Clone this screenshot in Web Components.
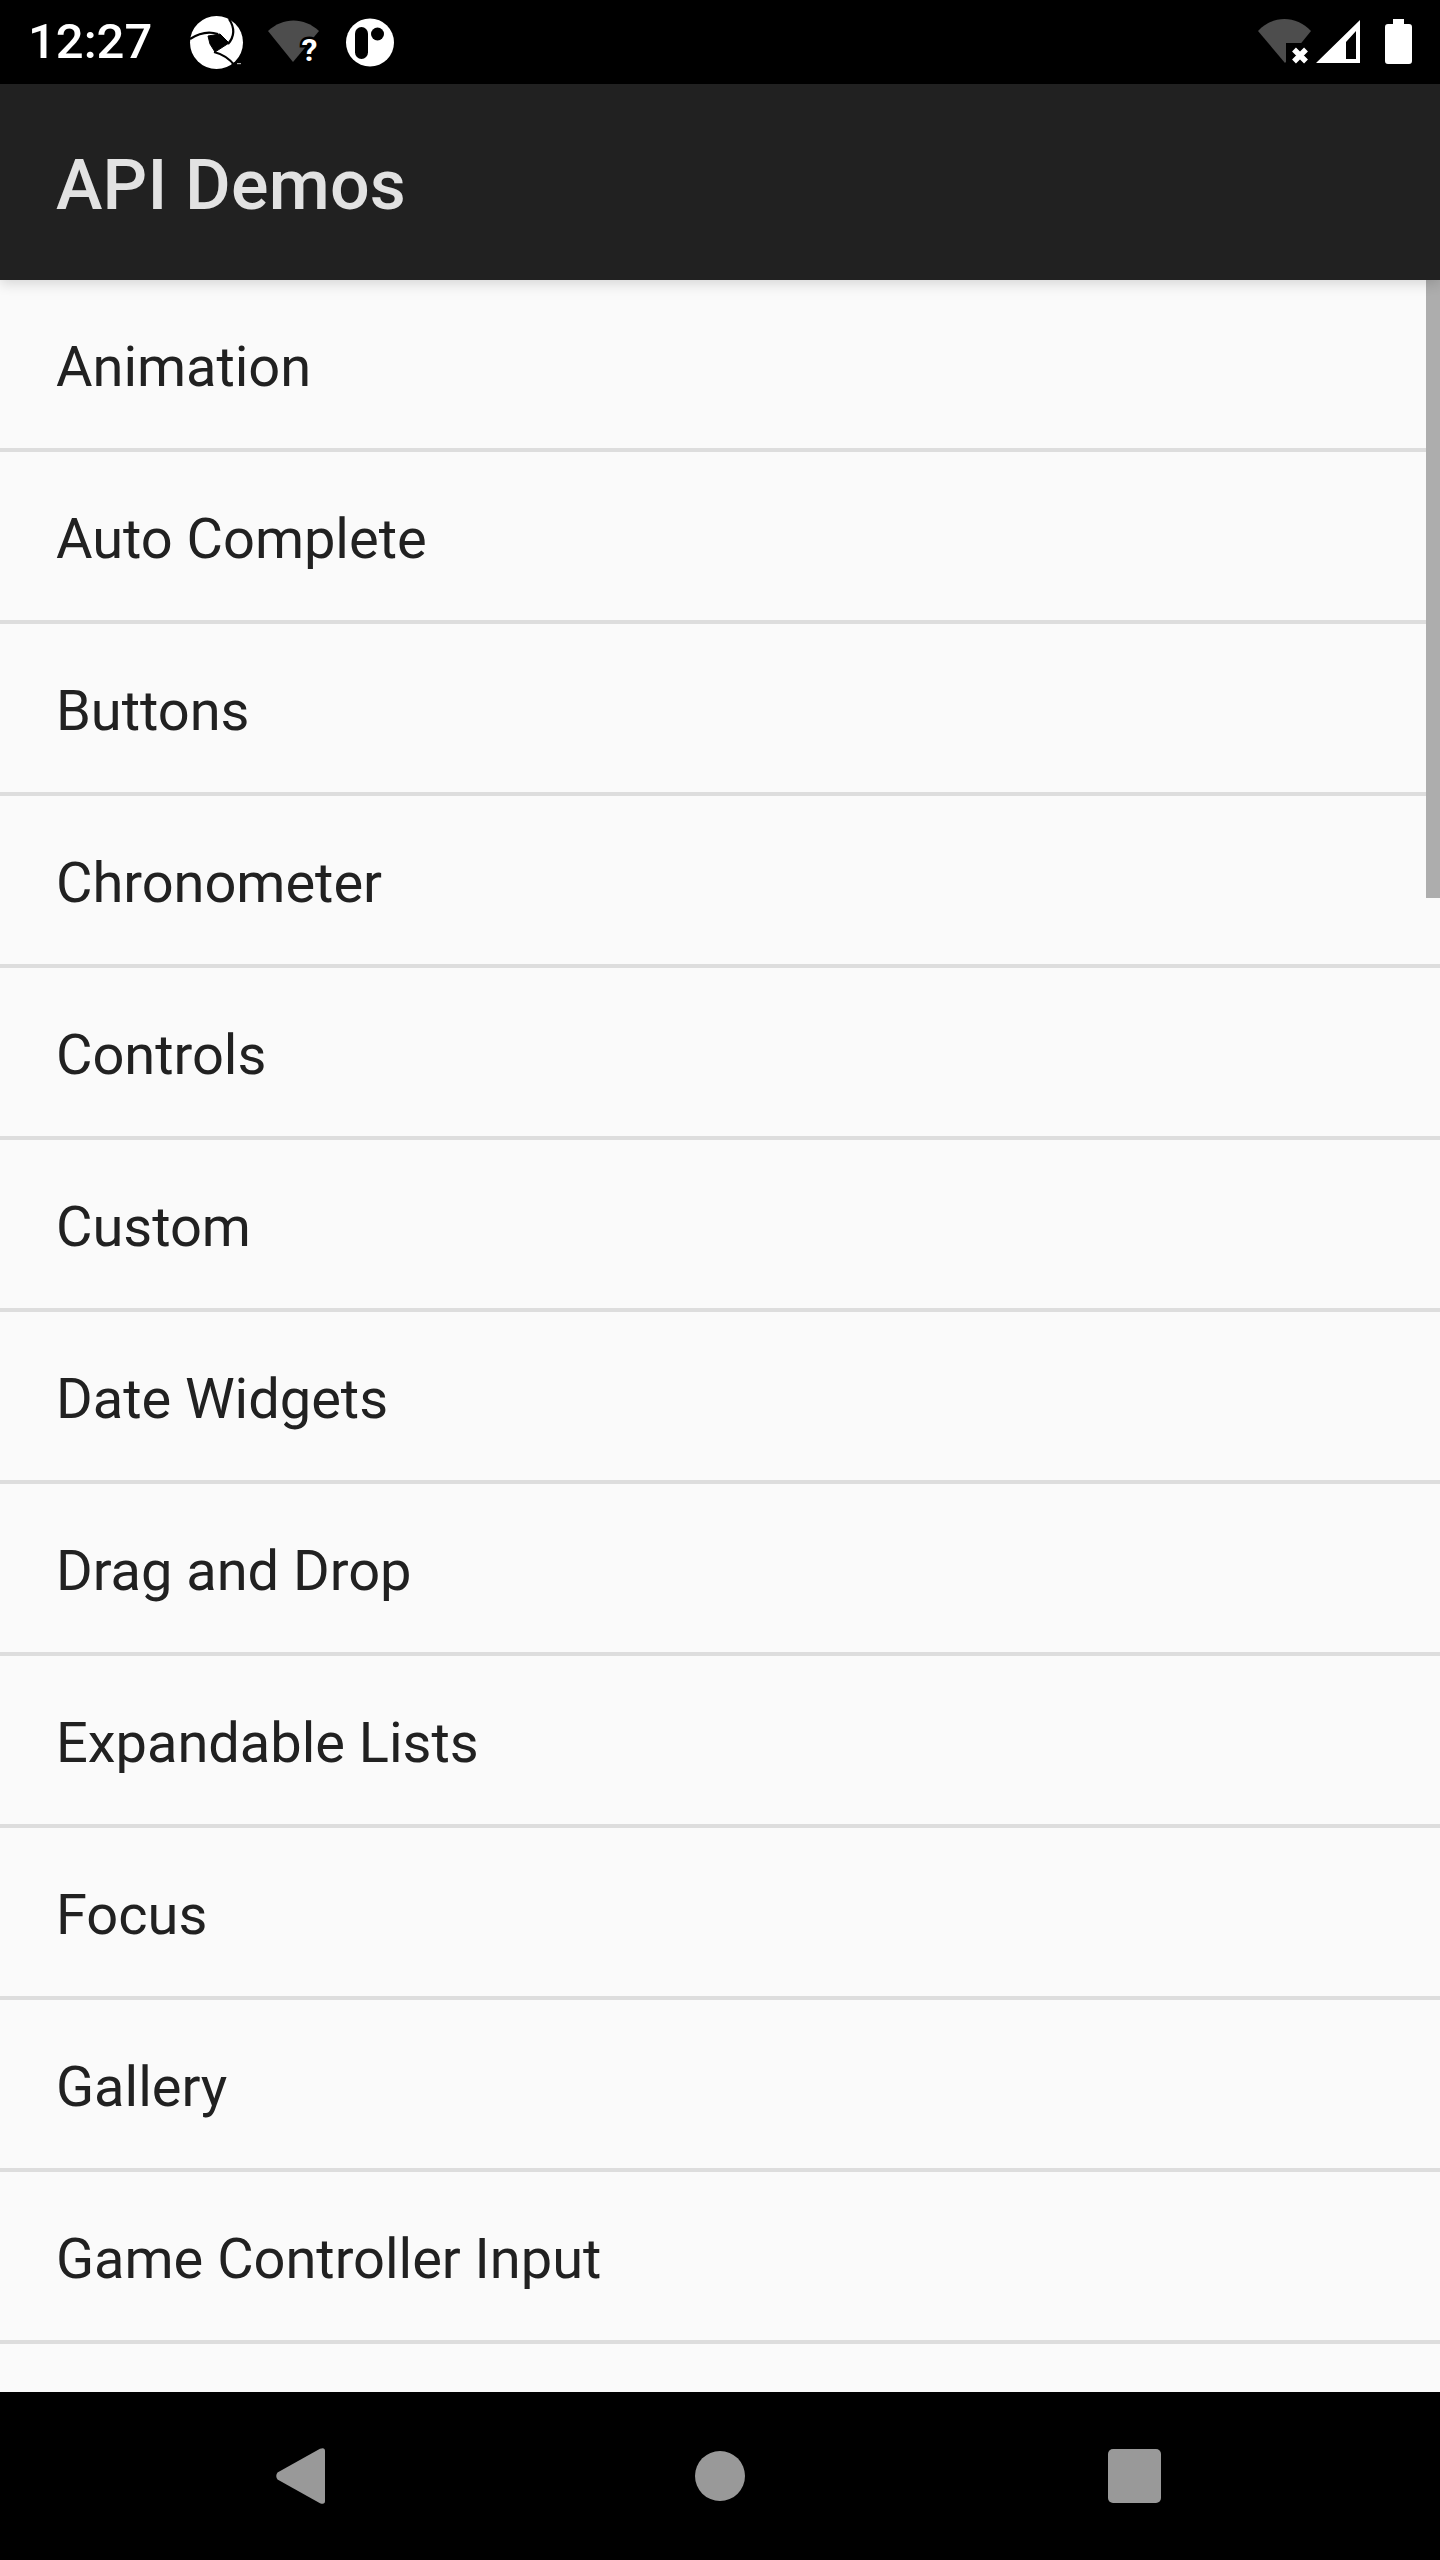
<!DOCTYPE html>
<html>
<head>
<meta charset="utf-8">
<title>API Demos</title>
<style>
    html, body { margin: 0; padding: 0; background: #000; }
    body { font-family: Roboto, "Liberation Sans", sans-serif; }
</style>
</head>
<body>
<phone-screen>
    <status-bar slot="status" time="12:27"></status-bar>
    <app-bar slot="bar">API Demos</app-bar>
    <demo-list slot="content" thumb="618">
        <demo-row>Animation</demo-row>
        <demo-row>Auto Complete</demo-row>
        <demo-row>Buttons</demo-row>
        <demo-row>Chronometer</demo-row>
        <demo-row>Controls</demo-row>
        <demo-row>Custom</demo-row>
        <demo-row>Date Widgets</demo-row>
        <demo-row>Drag and Drop</demo-row>
        <demo-row>Expandable Lists</demo-row>
        <demo-row>Focus</demo-row>
        <demo-row>Gallery</demo-row>
        <demo-row>Game Controller Input</demo-row>
    </demo-list>
    <nav-bar slot="nav"></nav-bar>
</phone-screen>

<script>
class PhoneScreen extends HTMLElement {
    constructor() {
        super();
        const shadow = this.attachShadow({ mode: 'open' });
        shadow.innerHTML = `
            <style>
                :host { display: flex; flex-direction: column; width: 1440px; height: 2560px; overflow: hidden; background: #fafafa; }
                .content { flex: 1; min-height: 0; display: flex; }
            </style>
            <slot name="status"></slot>
            <slot name="bar"></slot>
            <div class="content"><slot name="content"></slot></div>
            <slot name="nav"></slot>
        `;
    }
}

class StatusBar extends HTMLElement {
    constructor() {
        super();
        const shadow = this.attachShadow({ mode: 'open' });
        // every icon is 84px tall, so the y values in its viewBox are the y values on screen
        shadow.innerHTML = `
            <style>
                :host { display: flex; align-items: center; height: 84px; background: #000; color: #fff; box-sizing: border-box; padding: 0 28px 0 28px; }
                .time { font: 500 49px/84px Roboto, sans-serif; width: 162px; }
                svg { display: block; flex: none; }
                .left { display: flex; }
                .right { margin-left: auto; display: flex; }
                text { font: 700 32px Roboto, sans-serif; }
            </style>
            <div class="time">${this.getAttribute('time') || ''}</div>
            <div class="left">
                <svg width="53" height="84" viewBox="0 -16 53 84" style="margin-right:25px;overflow:visible">
                    <circle cx="26.5" cy="26.5" r="26.5" fill="#fff"/>
                    <g fill="none" stroke="#000" stroke-width="2.2">
                        <path d="M0 23C9 17 19 15 28 18"/>
                        <path d="M39 3C45 12 45 20 38 28"/>
                        <path d="M24 36C32 38 40 43 45 50"/>
                    </g>
                    <path d="M18 20 30 18 39 27 25 36 20 28Z" fill="#000" stroke="#000" stroke-linejoin="round"/>
                    <rect x="47" y="47" width="4" height="1.2" fill="#aaa"/>
                </svg>
                <svg width="51" height="84" viewBox="0 0 51 84" style="margin-right:27px;overflow:visible">
                    <path d="M0 31C15 17 36 17 51 31L25 62Z" fill="#4d4d4d"/>
                    <text x="41.5" y="60.5" text-anchor="middle" fill="#fff" stroke="#000" stroke-width="5" paint-order="stroke">?</text>
                </svg>
                <svg width="48" height="84" viewBox="0 0 48 84">
                    <circle cx="24" cy="42.5" r="24" fill="#fff"/>
                    <rect x="9" y="27" width="13" height="32" rx="6.5" fill="#000"/>
                    <circle cx="31.5" cy="34" r="6.5" fill="#000"/>
                </svg>
            </div>
            <div class="right">
                <svg width="58" height="84" viewBox="0 0 58 84">
                    <path d="M0 31C15 15 38 15 53 31L27 63Z" fill="#4d4d4d"/>
                    <rect x="28" y="43" width="30" height="24" fill="#000"/>
                    <path d="M36 49.5 48 61.5M48 49.5 36 61.5" stroke="#fff" stroke-width="5.5"/>
                </svg>
                <svg width="44" height="84" viewBox="0 0 44 84" style="margin-right:25px">
                    <path d="M0 63 44 20V63ZM30 42V59H40V31Z" fill="#fff" fill-rule="evenodd"/>
                </svg>
                <svg width="27" height="84" viewBox="0 0 27 84">
                    <path d="M8 19H19V24H24Q27 24 27 27V61Q27 64 24 64H3Q0 64 0 61V27Q0 24 3 24H8Z" fill="#fff"/>
                </svg>
            </div>
        `;
    }
}

class AppBar extends HTMLElement {
    constructor() {
        super();
        const shadow = this.attachShadow({ mode: 'open' });
        shadow.innerHTML = `
            <style>
                :host { display: flex; align-items: center; position: relative; z-index: 1; box-sizing: border-box; height: 196px; padding: 6px 0 0 56px; background: #212121; color: rgba(255,255,255,.87); font: 500 70px Roboto, sans-serif; letter-spacing: .2px; box-shadow: 0 4px 12px rgba(0,0,0,.14); }
            </style>
            <slot></slot>
        `;
    }
}

class DemoList extends HTMLElement {
    constructor() {
        super();
        const shadow = this.attachShadow({ mode: 'open' });
        shadow.innerHTML = `
            <style>
                :host { display: block; position: relative; flex: 1; overflow: hidden; background: #fafafa; }
                .thumb { position: absolute; top: 0; right: 0; width: 14px; background: #adadad; }
            </style>
            <slot></slot>
            <div class="thumb" style="height:${this.getAttribute('thumb')}px"></div>
        `;
    }
}

class DemoRow extends HTMLElement {
    constructor() {
        super();
        const shadow = this.attachShadow({ mode: 'open' });
        shadow.innerHTML = `
            <style>
                :host { display: flex; align-items: center; box-sizing: border-box; height: 172px; padding: 6px 0 0 56px; border-bottom: 4px solid #dddddd; color: #212121; font: 400 56px Roboto, sans-serif; letter-spacing: -.03px; }
            </style>
            <slot></slot>
        `;
    }
}

class NavBar extends HTMLElement {
    constructor() {
        super();
        const shadow = this.attachShadow({ mode: 'open' });
        shadow.innerHTML = `
            <style>
                :host { display: flex; align-items: center; box-sizing: border-box; height: 168px; padding-left: 276px; background: #000; }
                svg { display: block; flex: none; }
            </style>
            <svg width="49" height="56" viewBox="0 0 49 56" style="margin-right:370px"><path d="M1.5 24.5 44 .8Q49-1 49 3V53Q49 57 44 55.2L1.5 31.5Q-1 28 1.5 24.5Z" fill="#999"/></svg>
            <svg width="50" height="50" viewBox="0 0 50 50" style="margin-right:363px"><circle cx="25" cy="25" r="25" fill="#999"/></svg>
            <svg width="53" height="54" viewBox="0 0 53 54"><rect width="53" height="54" rx="5" fill="#999"/></svg>
        `;
    }
}

customElements.define('phone-screen', PhoneScreen);
customElements.define('status-bar', StatusBar);
customElements.define('app-bar', AppBar);
customElements.define('demo-list', DemoList);
customElements.define('demo-row', DemoRow);
customElements.define('nav-bar', NavBar);
</script>
</body>
</html>
